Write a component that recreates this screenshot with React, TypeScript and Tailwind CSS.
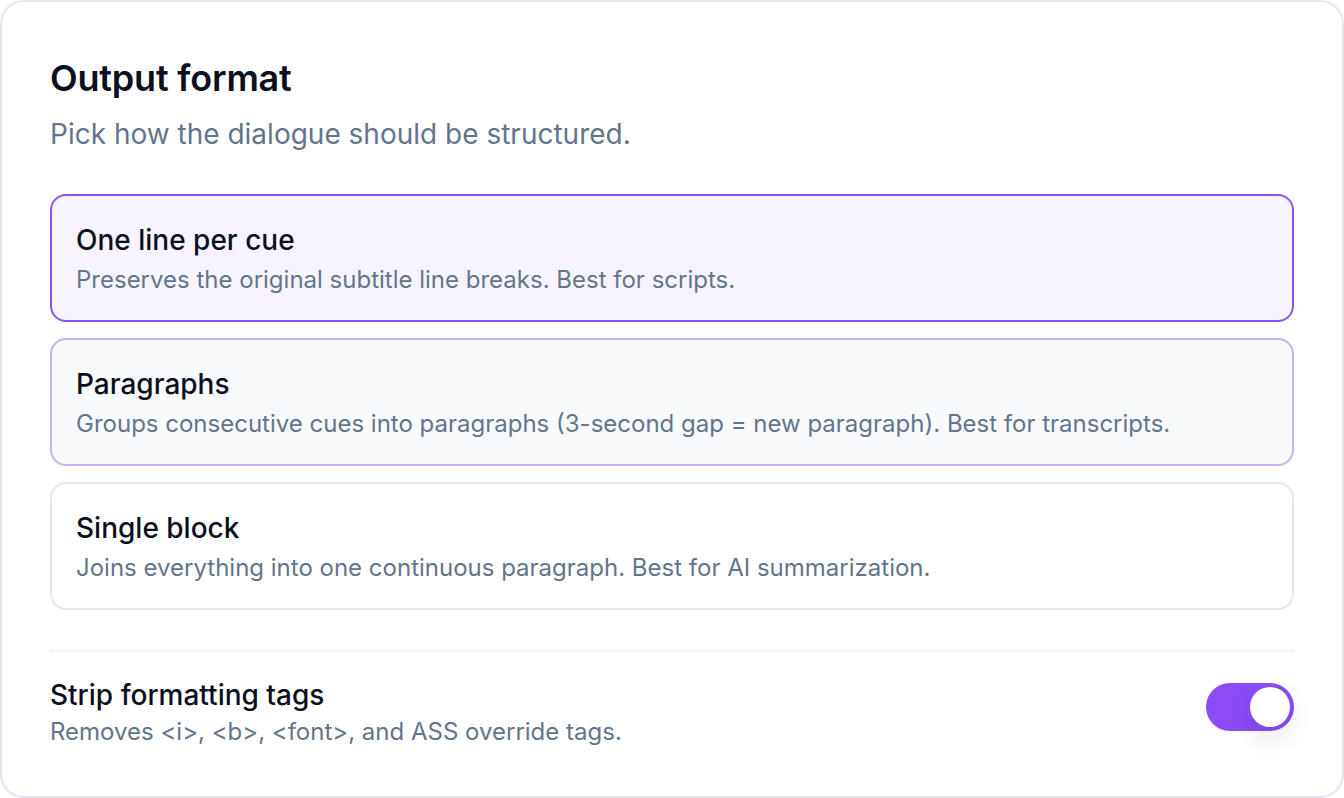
import React, { useState } from "react";

type Opt = { id: string; title: string; desc: string };

const OPTIONS: Opt[] = [
  { id: "line", title: "One line per cue", desc: "Preserves the original subtitle line breaks. Best for scripts." },
  { id: "para", title: "Paragraphs", desc: "Groups consecutive cues into paragraphs (3-second gap = new paragraph). Best for transcripts." },
  { id: "block", title: "Single block", desc: "Joins everything into one continuous paragraph. Best for AI summarization." },
];

export default function App() {
  const [selected, setSelected] = useState("line");
  const [strip, setStrip] = useState(true);

  return (
    <div className="w-[1344px] h-[798px] bg-white" style={{ fontFamily: "Inter, 'Noto Sans', sans-serif" }}>
      <div className="box-border h-[798px] w-full overflow-hidden rounded-[24px] border-2 border-[#e2e8f0] bg-white px-12 pt-12">
        <h1 className="text-[36px] leading-[56px] font-semibold text-[#0b1020] tracking-[-0.2px]">Output format</h1>
        <p className="mt-2 text-[28px] leading-[40px] text-[#64748b]">Pick how the dialogue should be structured.</p>

        <div className="mt-10 flex flex-col gap-4">
          {OPTIONS.map((o, i) => {
            const cls =
              o.id === selected
                ? "border-[#8b55f6] bg-[#f8f4ff]"
                : i === 1
                ? "border-[#c9aefa] bg-[#f8fafc]"
                : "border-[#e2e8f0] bg-white";
            return (
              <button
                key={o.id}
                onClick={() => setSelected(o.id)}
                className={`box-border h-[128px] w-full rounded-[16px] border-2 px-6 pt-[26px] pb-[22px] text-left ${cls}`}
              >
                <div className="text-[28px] leading-[36px] font-medium text-[#0b1020]">{o.title}</div>
                <div className="mt-1 text-[24px] leading-[36px] text-[#64748b]">{o.desc}</div>
              </button>
            );
          })}
        </div>

        <div className="mt-10 border-t-2 border-[#f1f5f9] pt-[25px] flex items-start justify-between">
          <div>
            <div className="text-[28px] leading-[36px] font-medium text-[#0b1020]">Strip formatting tags</div>
            <div className="mt-[1px] text-[24px] leading-[36px] text-[#64748b]">
              Removes &lt;i&gt;, &lt;b&gt;, &lt;font&gt;, and ASS override tags.
            </div>
          </div>
          <button
            onClick={() => setStrip(!strip)}
            className={`mt-[6px] flex h-[48px] w-[88px] items-center rounded-full p-1 ${strip ? "justify-end bg-[#8b4cf6]" : "justify-start bg-[#e2e8f0]"}`}
          >
            <span className="block h-10 w-10 rounded-full bg-white shadow-[0_10px_24px_rgba(15,23,42,0.12)]" />
          </button>
        </div>
      </div>
    </div>
  );
}
